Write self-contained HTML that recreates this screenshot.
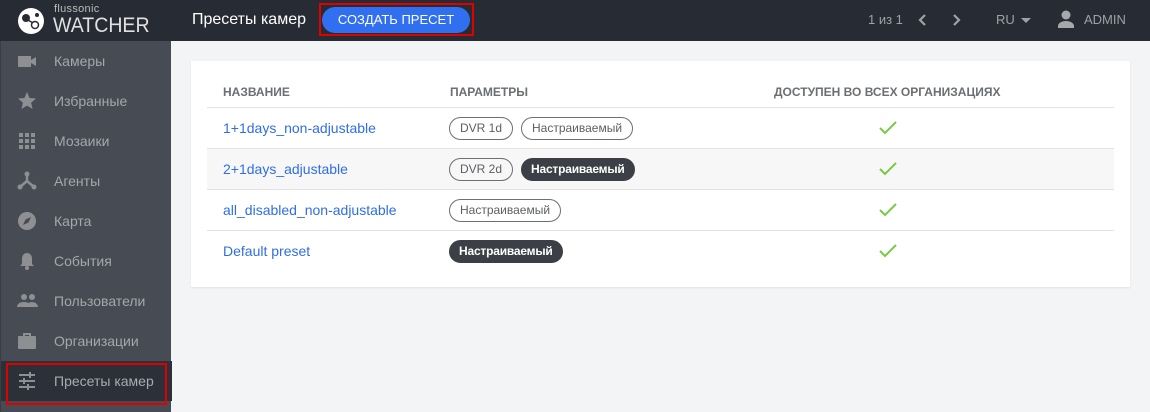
<!DOCTYPE html>
<html><head><meta charset="utf-8"><style>
*{box-sizing:border-box;margin:0;padding:0}
body{width:1150px;height:412px;overflow:hidden;background:#f3f4f5;font-family:"Liberation Sans",sans-serif;position:relative}
.hdr{position:absolute;left:0;top:0;width:1150px;height:41px;background:#272b33}
.side{position:absolute;left:0;top:41px;width:171px;height:371px;background:#474b53;border-left:1px solid #3a3d44}
.item{position:absolute;left:0;width:171px;height:40px;color:#a5a7ab;font-size:14px;line-height:40px;padding-left:53px}
.item svg{position:absolute;left:16px;top:10px}
.active{background:#2c3039;color:#a9abaf}
.card{position:absolute;left:191px;top:61px;width:939px;height:226px;background:#fff;box-shadow:0 1px 2px rgba(0,0,0,.08)}
.th{position:absolute;top:24px;font-size:12px;font-weight:bold;color:#6b6e72}
.row{position:absolute;left:16px;width:907px;height:41px;border-top:1px solid #e3e3e3}
.row a{position:absolute;left:16px;top:12px;color:#2f6ee6;font-size:14px;text-decoration:none}
.b{position:absolute;top:9px;height:23px;border:1px solid #6c6f73;border-radius:12px;font-size:12px;color:#5c5f63;line-height:21px;padding:0 10px;white-space:nowrap}
.b.d{background:#3c3f45;border-color:#3c3f45;color:#fff;font-weight:bold;padding:0 9px;letter-spacing:-0.2px}
.ck{position:absolute;left:672px;top:13px}
</style></head><body>
<div class="hdr">
 <svg style="position:absolute;left:17px;top:7px" width="28" height="28" viewBox="0 0 28 28"><circle cx="14" cy="14" r="13" fill="#fff"/><circle cx="9" cy="11" r="4" fill="#272b33"/><circle cx="18" cy="18" r="3.5" fill="none" stroke="#272b33" stroke-width="1.5"/><circle cx="20" cy="8" r="2" fill="#272b33"/><line x1="11" y1="13" x2="16" y2="16" stroke="#272b33" stroke-width="1.5"/></svg>
 <div style="position:absolute;left:54px;top:3px;color:#bbb;font-size:11px;letter-spacing:.3px">flussonic</div>
 <div style="position:absolute;left:53px;top:14px;color:#e0e0e0;font-size:21px;letter-spacing:0px;transform:scaleX(0.93);transform-origin:left">WATCHER</div>
 <div style="position:absolute;left:192px;top:11px;color:#fff;font-size:16px">Пресеты камер</div>
 <div style="position:absolute;left:319px;top:3px;width:155px;height:33px;border:2px solid #e00000"></div>
 <div style="position:absolute;left:322px;top:7px;width:148px;height:26px;background:#2f6ff0;border-radius:13px;color:#fff;font-size:13px;line-height:26px;text-align:center">СОЗДАТЬ ПРЕСЕТ</div>
 <div style="position:absolute;left:868px;top:12px;color:#9ea1a6;font-size:13px">1 из 1</div>
 <svg style="position:absolute;left:917px;top:13px" width="12" height="14"><path d="M8 2L3 7l5 5" stroke="#9ea1a6" stroke-width="2.2" fill="none"/></svg>
 <svg style="position:absolute;left:950px;top:13px" width="12" height="14"><path d="M4 2l5 5-5 5" stroke="#9ea1a6" stroke-width="2.2" fill="none"/></svg>
 <div style="position:absolute;left:996px;top:12px;color:#9ea1a6;font-size:13px">RU</div>
 <svg style="position:absolute;left:1020px;top:17px" width="12" height="7"><path d="M1 1h10L6 6z" fill="#9ea1a6"/></svg>
 <svg style="position:absolute;left:1057px;top:10px" width="18" height="18"><circle cx="9" cy="5" r="4.5" fill="#a6a8ac"/><path d="M1 18v-2c0-3 4-5 8-5s8 2 8 5v2z" fill="#a6a8ac"/></svg>
 <div style="position:absolute;left:1084px;top:12px;color:#9ea1a6;font-size:13px">ADMIN</div>
</div>
<div class="side">
 <div class="item" style="top:0"><svg width="20" height="20"><rect x="1" y="5" width="13" height="11" fill="#8d8f93"/><path d="M14 9l5-3v9l-5-3z" fill="#8d8f93"/></svg>Камеры</div>
 <div class="item" style="top:40px"><svg width="20" height="20"><path d="M10 1l2.6 6 6.4.5-4.9 4.2 1.5 6.3L10 14.6 4.4 18l1.5-6.3L1 7.5l6.4-.5z" fill="#8d8f93"/></svg>Избранные</div>
 <div class="item" style="top:80px"><svg width="20" height="20" fill="#8d8f93"><rect x="2" y="2" width="4" height="4"/><rect x="8" y="2" width="4" height="4"/><rect x="14" y="2" width="4" height="4"/><rect x="2" y="8" width="4" height="4"/><rect x="8" y="8" width="4" height="4"/><rect x="14" y="8" width="4" height="4"/><rect x="2" y="14" width="4" height="4"/><rect x="8" y="14" width="4" height="4"/><rect x="14" y="14" width="4" height="4"/></svg>Мозаики</div>
 <div class="item" style="top:120px"><svg width="20" height="20"><path d="M10 3v7L3 16M10 10l7 6" stroke="#8d8f93" stroke-width="2.5" fill="none"/><circle cx="10" cy="3" r="2.5" fill="#8d8f93"/><circle cx="3" cy="16" r="2.5" fill="#8d8f93"/><circle cx="17" cy="16" r="2.5" fill="#8d8f93"/></svg>Агенты</div>
 <div class="item" style="top:160px"><svg width="20" height="20"><circle cx="10" cy="10" r="9" fill="#8d8f93"/><path d="M14 6l-2.5 5.5L6 14l2.5-5.5z" fill="#474b53"/></svg>Карта</div>
 <div class="item" style="top:200px"><svg width="20" height="20" fill="#8d8f93"><path d="M10 2c-3 0-5 2.5-5 5.5V13l-2 2h14l-2-2V7.5C15 4.5 13 2 10 2z"/><circle cx="10" cy="17" r="2"/></svg>События</div>
 <div class="item" style="top:240px"><svg width="22" height="20" fill="#8d8f93"><circle cx="7" cy="6" r="3"/><circle cx="15" cy="6" r="3"/><path d="M0 16c0-3 3-5 7-5s7 2 7 5zM10 16c0-3 2-5 5-5s6 2 6 5z"/></svg>Пользователи</div>
 <div class="item" style="top:280px"><svg width="20" height="20" fill="#8d8f93"><rect x="1" y="5" width="18" height="13" rx="1"/><path d="M7 5V3h6v2" stroke="#8d8f93" stroke-width="2" fill="none"/></svg>Организации</div>
 <div class="item active" style="top:320px"><svg width="20" height="20" fill="#8d8f93"><rect x="2" y="3" width="16" height="2"/><rect x="2" y="9" width="16" height="2"/><rect x="2" y="15" width="16" height="2"/><rect x="12" y="1" width="2" height="6"/><rect x="6" y="7" width="2" height="6"/><rect x="10" y="13" width="2" height="6"/></svg>Пресеты камер</div>
 <div style="position:absolute;left:5px;top:322px;width:161px;height:42px;border:2px solid #e00000"></div>
</div>
<div class="card">
 <div class="th" style="left:32px">НАЗВАНИЕ</div>
 <div class="th" style="left:259px">ПАРАМЕТРЫ</div>
 <div class="th" style="left:583px">ДОСТУПЕН ВО ВСЕХ ОРГАНИЗАЦИЯХ</div>
 <div class="row" style="top:46px"><a>1+1days_non-adjustable</a><span class="b" style="left:242px">DVR 1d</span><span class="b" style="left:314px">Настраиваемый</span><svg class="ck" width="18" height="14"><path d="M1 7l5 5L17 1" stroke="#7ac943" stroke-width="2" fill="none"/></svg></div>
 <div class="row" style="top:87px;background:#f7f7f7"><a>2+1days_adjustable</a><span class="b" style="left:242px">DVR 2d</span><span class="b d" style="left:314px">Настраиваемый</span><svg class="ck" width="18" height="14"><path d="M1 7l5 5L17 1" stroke="#7ac943" stroke-width="2" fill="none"/></svg></div>
 <div class="row" style="top:128px"><a>all_disabled_non-adjustable</a><span class="b" style="left:242px">Настраиваемый</span><svg class="ck" width="18" height="14"><path d="M1 7l5 5L17 1" stroke="#7ac943" stroke-width="2" fill="none"/></svg></div>
 <div class="row" style="top:169px"><a>Default preset</a><span class="b d" style="left:242px">Настраиваемый</span><svg class="ck" width="18" height="14"><path d="M1 7l5 5L17 1" stroke="#7ac943" stroke-width="2" fill="none"/></svg></div>
</div>
</body></html>
